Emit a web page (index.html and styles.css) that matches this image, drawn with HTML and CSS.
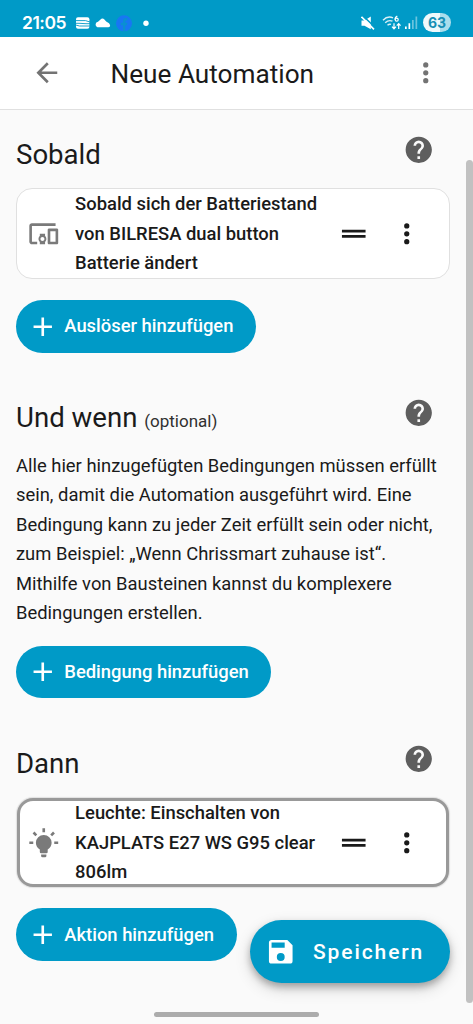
FILE: index.html
```html
<!DOCTYPE html>
<html lang="de">
<head>
<meta charset="utf-8">
<meta name="viewport" content="width=device-width, initial-scale=1">
<title>Neue Automation</title>
<link rel="stylesheet" href="styles.css">
</head>
<body>
<svg class="defs" width="0" height="0" aria-hidden="true">
  <symbol id="help" viewBox="0 0 24 24"><path d="M15.07,11.25L14.17,12.17C13.45,12.89 13,13.5 13,15H11V14.5C11,13.39 11.45,12.39 12.17,11.67L13.41,10.41C13.78,10.05 14,9.55 14,9C14,7.89 13.1,7 12,7A2,2 0 0,0 10,9H8A4,4 0 0,1 12,5A4,4 0 0,1 16,9C16,9.88 15.64,10.67 15.07,11.25M13,19H11V17H13M12,2A10,10 0 0,0 2,12A10,10 0 0,0 12,22A10,10 0 0,0 22,12C22,6.47 17.5,2 12,2Z"/></symbol>
  <symbol id="dots" viewBox="0 0 24 24"><path d="M12,16A2,2 0 0,1 14,18A2,2 0 0,1 12,20A2,2 0 0,1 10,18A2,2 0 0,1 12,16M12,10A2,2 0 0,1 14,12A2,2 0 0,1 12,14A2,2 0 0,1 10,12A2,2 0 0,1 12,10M12,4A2,2 0 0,1 14,6A2,2 0 0,1 12,8A2,2 0 0,1 10,6A2,2 0 0,1 12,4Z"/></symbol>
  <symbol id="drag" viewBox="0 0 24 24"><path d="M3,15V13H21V15H3M3,11V9H21V11H3Z"/></symbol>
  <symbol id="plus" viewBox="0 0 24 24"><path d="M19,13H13V19H11V13H5V11H11V5H13V11H19V13Z"/></symbol>
</svg>
<div class="screen">
  <div class="status">
    <span class="clock">21:05</span>
    <svg class="s-notes" width="74" height="18" viewBox="0 0 74 18">
      <rect x="1" y="3.2" width="13.4" height="11.6" rx="2" fill="#fff"/>
      <path d="M0 6.600H10.500L15 8M0 9.300H4L11 9.700H15M0 10.800L4.500 12H15" fill="none" stroke="#009ac7" stroke-width=".9"/>
      <path d="M23 13.200a2.800 2.800 0 0 1 .6-5.400L27 4.800Q28.600 3.900 30 5.600L31.800 7.600L34.600 9.200Q37.200 12.600 34 13.200Z" transform="translate(-.6)" fill="#fff"/>
      <circle cx="49" cy="9.300" r="8" fill="#1877f2"/>
      <path d="M48 17.200V11.300H45.800V8.700H48V7.200C48 4.800 49.300 3.800 52.200 4.200V6.500C50.700 6.400 50.400 6.800 50.400 7.600V8.700H52.300L51.900 11.300H50.400V17.200Z" fill="#0a8fd2"/>
      <circle cx="71" cy="9.200" r="2.700" fill="#fff"/>
    </svg>
    <span class="grow"></span>
    <svg class="s-mute" width="14" height="14" viewBox="0 0 14 14" fill="#fff">
      <path d="M0.500 4.500H3.500L9.800 0.500V13.200L3.500 9.800H0.500Z"/>
      <path d="M1.700 -.4L14.700 12" stroke="#009ac7" stroke-width="1.500"/><path d="M.5 .8L13 13.400" stroke="#fff" stroke-width="1.600"/>
    </svg>
    <svg class="s-wifi" width="19" height="16" viewBox="0 0 19 16" fill="none" stroke="#fff">
      <path d="M1 5.200C4 2 8 1.400 11 2.800M3.200 7.800C5.500 5.600 8.300 5.200 10.500 6.200M5.500 10.300C6.700 9.200 8 9 9 9.400" stroke-width="1.400" opacity=".85"/>
      <path d="M15.300 1.200C13.500 2 13 3.300 13.100 4.600" stroke-width="1.300"/><circle cx="14.700" cy="4.700" r="1.500" stroke-width="1.200"/>
      <path d="M12 8.300V13.600M10 11.700L12 13.900L14 11.700M16.700 14V8.800M14.800 10.700L16.700 8.600L18.600 10.700" stroke-width="1.200"/>
    </svg>
    <svg class="s-signal" width="13" height="13" viewBox="0 0 13 13" fill="#fff">
      <path d="M0 10.500H1.700V13H0ZM3.500 7.200H5.200V13H3.500Z"/><path d="M7 4H8.700V13H7ZM10.500 .5H12.200V13H10.500Z" opacity=".42"/>
    </svg>
    <span class="battery">63</span>
  </div>
  <header class="topbar">
    <svg class="icon" viewBox="0 0 24 24"><path d="M20,11V13H8L13.500,18.500L12.080,19.920L4.160,12L12.080,4.080L13.500,5.500L8,11H20Z"/></svg>
    <h1 class="title">Neue Automation</h1>
    <svg class="icon"><use href="#dots"/></svg>
  </header>
  <main class="content">
    <section class="section">
      <div class="head"><h2>Sobald</h2><svg class="icon"><use href="#help"/></svg></div>
      <div class="card">
        <svg class="icon lead" viewBox="0 0 24 24"><path d="M3 6H21V4H3C1.900 4 1 4.900 1 6V18C1 19.100 1.900 20 3 20H7V18H3V6M13 12H9V13.780C8.390 14.330 8 15.110 8 16C8 16.890 8.390 17.670 9 18.220V20H13V18.220C13.610 17.670 14 16.880 14 16S13.610 14.330 13 13.780V12M11 17.500C10.170 17.500 9.500 16.830 9.500 16S10.170 14.500 11 14.500 12.500 15.170 12.500 16 11.830 17.500 11 17.500M22 8H16C15.500 8 15 8.500 15 9V19C15 19.500 15.500 20 16 20H22C22.500 20 23 19.500 23 19V9C23 8.500 22.500 8 22 8M21 18H17V10H21V18Z"/></svg>
        <div class="label">Sobald sich der Batteriestand<br>von BILRESA dual button<br>Batterie ändert</div>
        <svg class="icon"><use href="#drag"/></svg>
        <svg class="icon"><use href="#dots"/></svg>
      </div>
      <button class="add"><svg class="icon"><use href="#plus"/></svg><span>Auslöser hinzufügen</span></button>
    </section>
    <section class="section">
      <div class="head"><h2>Und wenn <small>(optional)</small></h2><svg class="icon"><use href="#help"/></svg></div>
      <p class="text">Alle hier hinzugefügten Bedingungen müssen erfüllt<br>sein, damit die Automation ausgeführt wird. Eine<br>Bedingung kann zu jeder Zeit erfüllt sein oder nicht,<br>zum Beispiel: „Wenn Chrissmart zuhause ist“.<br>Mithilfe von Bausteinen kannst du komplexere<br>Bedingungen erstellen.</p>
      <button class="add"><svg class="icon"><use href="#plus"/></svg><span>Bedingung hinzufügen</span></button>
    </section>
    <section class="section">
      <div class="head"><h2>Dann</h2><svg class="icon"><use href="#help"/></svg></div>
      <div class="card selected">
        <svg class="icon lead" viewBox="0 0 24 24"><path d="M12,6A6,6 0 0,1 18,12C18,14.220 16.790,16.160 15,17.200V19A1,1 0 0,1 14,20H10A1,1 0 0,1 9,19V17.200C7.210,16.160 6,14.220 6,12A6,6 0 0,1 12,6M14,21V22A1,1 0 0,1 13,23H11A1,1 0 0,1 10,22V21H14M20,11H23V13H20V11M1,11H4V13H1V11M13,1V4H11V1H13M4.920,3.500L7.050,5.640L5.630,7.050L3.500,4.930L4.920,3.500M16.950,5.630L19.070,3.500L20.500,4.930L18.370,7.050L16.950,5.630Z"/></svg>
        <div class="label">Leuchte: Einschalten von<br>KAJPLATS E27 WS G95 clear<br>806lm</div>
        <svg class="icon"><use href="#drag"/></svg>
        <svg class="icon"><use href="#dots"/></svg>
      </div>
      <button class="add"><svg class="icon"><use href="#plus"/></svg><span>Aktion hinzufügen</span></button>
    </section>
  </main>
  <button class="save"><svg class="icon" viewBox="0 0 24 24"><path d="M15,9H5V5H15M12,19A3,3 0 0,1 9,16A3,3 0 0,1 12,13A3,3 0 0,1 15,16A3,3 0 0,1 12,19M17,3H5C3.890,3 3,3.900 3,5V19A2,2 0 0,0 5,21H19A2,2 0 0,0 21,19V7L17,3Z"/></svg><span>Speichern</span></button>
  <div class="scrollbar"></div>
  <div class="gesture"></div>
</div>
</body>
</html>
```
FILE: styles.css
```css
* { box-sizing: border-box; }
body { margin: 0; background: #fafafa; color: #1a1a1a; font-family: Roboto, sans-serif; font-size: 18.4px; }
h1, h2, p { margin: 0; font-weight: 400; }
button { border: 0; font: inherit; }
.defs { position: absolute; }
.screen { position: relative; height: 1024px; overflow: hidden; }
.icon { width: 31.5px; height: 31.5px; flex: none; fill: currentColor; display: block; }

.status { height: 37px; padding: 8px 22px 0 22px; background: #009ac7; color: #fff; display: flex; align-items: center; }
.clock { width: 52px; font-size: 17.5px; font-weight: 600; font-family: Inter, sans-serif; letter-spacing: -0.5px; white-space: nowrap; }
.grow { flex: 1; }
.s-notes { margin-left: 1px; }
.s-mute { margin-right: 7px; margin-left: 2px; }
.s-wifi { margin-right: 4px; }
.s-signal { margin-right: 5px; }
.battery { width: 28px; height: 19px; border-radius: 10px; background: linear-gradient(90deg, #eef9fc 62%, #a9ddec 62%); color: #168fb5; font: 700 14px/19px Inter, sans-serif; text-align: center; }

.topbar { height: 73px; padding: 0 32px 0 31px; background: #fff; border-bottom: 1.5px solid #e0e0e0; display: flex; align-items: center; color: #737373; }
.title { flex: 1; margin-left: 48px; padding-top: 1px; color: #1a1a1a; font-size: 26.2px; line-height: 34px; }

.content { padding: 8px 23px 0 16px; }
.section { display: flex; flex-direction: column; align-items: flex-start; margin-bottom: 28.4px; }
.head { width: 100%; height: 63px; padding-right: 15.5px; display: flex; align-items: center; justify-content: space-between; color: #5e5e5e; }
.head h2 { padding-top: 11px; color: #1a1a1a; font-size: 27.6px; line-height: 36px; }
.head small { font-size: 17px; line-height: 1; color: #303030; }
.card { width: 100%; height: 91px; margin: 7px 0 21px; padding: 0 27px 0 10.6px; display: flex; align-items: center; gap: 21px; background: #fff; border: 1.3px solid #e0e0e0; border-radius: 16px; }
.card.selected { width: calc(100% - 2px); height: 89px; margin: 8px 1px 21.5px; padding: 0 24px 0 7.6px; border: 3px solid #999; box-shadow: 0 0 1px 1px #e0e0e0; }
.lead { color: #7a7a7a; margin-right: -5px; }
.label { flex: 1; font-weight: 500; line-height: 29.4px; white-space: nowrap; }
.add { height: 52.5px; padding: 0 22.5px 0 11.3px; border-radius: 27px; background: #009ac7; color: #fff; display: flex; align-items: center; gap: 5.5px; font-weight: 500; white-space: nowrap; }
.add span { padding-bottom: 1px; }
.text { margin: 7px 0 18.6px; line-height: 29.4px; white-space: nowrap; }

.save { position: absolute; left: 250px; top: 920px; width: 200px; height: 63px; padding: 0 0 0 15px; border-radius: 32px; background: #009ac7; color: #fff; display: flex; align-items: center; gap: 16.5px; font-size: 21px; font-weight: 500; letter-spacing: 1.9px; box-shadow: 0 4px 7px rgba(0,0,0,.26), 0 6px 16px rgba(0,0,0,.16); }
.scrollbar { position: absolute; left: 466px; top: 160px; width: 7px; height: 843px; border-radius: 4px; background: #c1c1c1; }
.gesture { position: absolute; left: 154px; top: 1012px; width: 165px; height: 5px; border-radius: 3px; background: #acacac; }
```
